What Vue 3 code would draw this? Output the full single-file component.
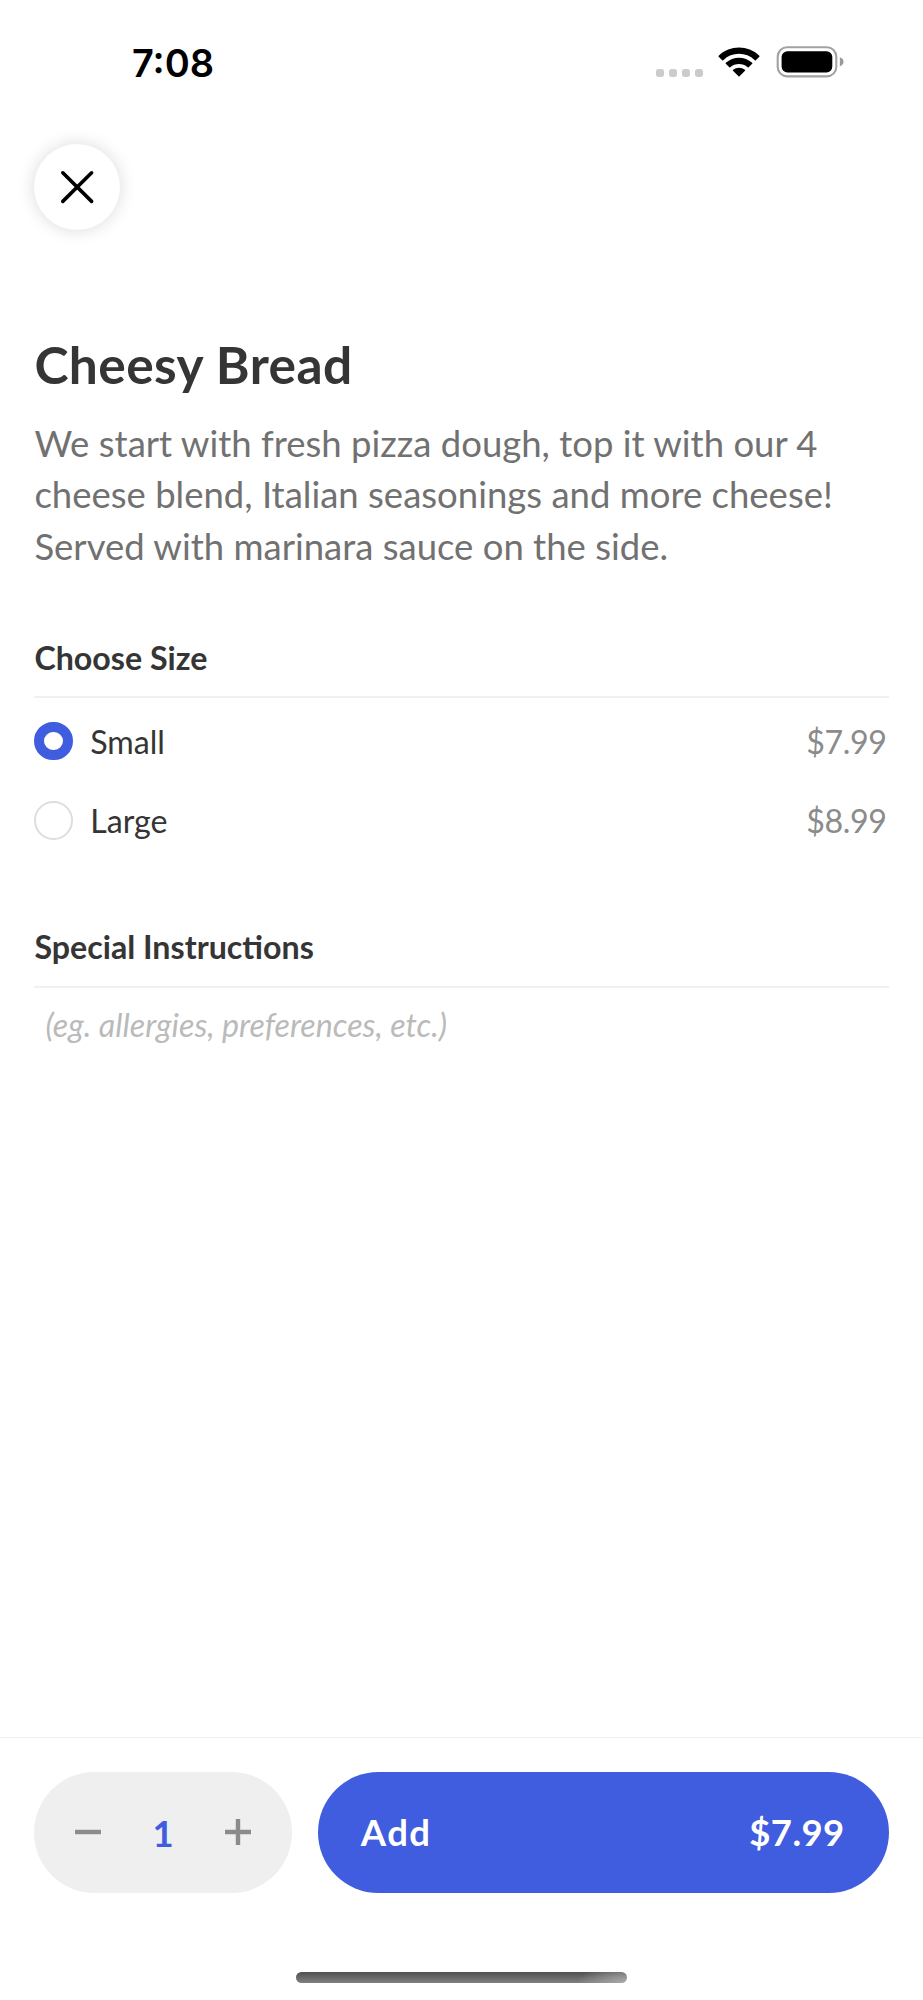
<script setup>
import { ref, computed } from 'vue'

const sizes = [
  { name: 'Small', price: 7.99 },
  { name: 'Large', price: 8.99 }
]
const selected = ref(0)
const quantity = ref(1)
const notes = ref('')
const money = (value) => '$' + value.toFixed(2)
const total = computed(() => money(sizes[selected.value].price * quantity.value))
</script>

<template>
  <div class="screen">
    <header class="status">
      <span class="time">7:08</span>
      <div class="indicators">
        <div class="signal"><i v-for="n in 4" :key="n"></i></div>
        <svg class="wifi" width="42" height="31" viewBox="0 0 42 31">
          <path d="M0.7 9.7Q0.2 9.2 0.7 8.7C12-2.2 30-2.2 41.3 8.7Q41.8 9.2 41.3 9.7L37.8 13.2Q37.3 13.6 36.8 13.2C28 4.7 14 4.7 5.2 13.2Q4.7 13.6 4.2 13.2Z" />
          <path d="M7.8 16.8Q7.3 16.3 7.8 15.8C15.2 8.9 26.8 8.9 34.2 15.8Q34.7 16.3 34.2 16.8L30.7 20.2Q30.2 20.7 29.7 20.2C24.8 15.9 17.2 15.9 12.3 20.2Q11.8 20.7 11.3 20.2Z" />
          <path d="M15 23.8Q14.5 23.3 15.1 22.8C18.5 20 23.5 20 26.9 22.8Q27.5 23.3 27 23.8L21.5 29.3Q21 29.8 20.5 29.3Z" />
        </svg>
        <svg class="battery" width="68" height="32" viewBox="0 0 68 32">
          <rect x="1.7" y="1.2" width="58.6" height="29.2" rx="9.5" fill="none" stroke="#a2a2a2" stroke-width="2.1" />
          <rect x="5.6" y="5.2" width="50.7" height="21.2" rx="5.8" />
          <path d="M63.8 11.3C66.2 12.2 67.5 13.8 67.5 15.8S66.2 19.5 63.8 20.4Z" fill="#999" />
        </svg>
      </div>
    </header>

    <button class="close" aria-label="Close">
      <svg width="36" height="36" viewBox="0 0 36 36">
        <path d="M3.8 3.8L32.6 32.4M32.6 3.8L3.8 32.4" stroke="#000" stroke-width="3.6" stroke-linecap="round" />
      </svg>
    </button>

    <main>
      <h1>Cheesy Bread</h1>
      <p class="description">We start with fresh pizza dough, top it with our 4 cheese blend, Italian seasonings and more cheese! Served with marinara sauce on the side.</p>

      <section class="sizes">
        <h2>Choose Size</h2>
        <div class="options">
          <div v-for="(size, index) in sizes" :key="size.name" class="option" @click="selected = index">
            <span class="radio" :class="{ checked: index === selected }"></span>
            <span class="name">{{ size.name }}</span>
            <span class="price">{{ money(size.price) }}</span>
          </div>
        </div>
      </section>

      <section class="instructions">
        <h2>Special Instructions</h2>
        <input v-model="notes" placeholder="(eg. allergies, preferences, etc.)" />
      </section>
    </main>

    <footer>
      <div class="actions">
        <div class="stepper">
          <button aria-label="Decrease" @click="quantity = Math.max(1, quantity - 1)">
            <svg width="26" height="26" viewBox="0 0 26 26"><path d="M0 13H26" /></svg>
          </button>
          <span>{{ quantity }}</span>
          <button aria-label="Increase" @click="quantity++">
            <svg width="26" height="26" viewBox="0 0 26 26"><path d="M0 13H26M13 0V26" /></svg>
          </button>
        </div>
        <button class="add"><span>Add</span><span class="total">{{ total }}</span></button>
      </div>
      <div class="home"></div>
    </footer>
  </div>
</template>

<style>
body { margin: 0; background: #fff; }
</style>

<style scoped>
* { box-sizing: border-box; }
.screen { width: 923px; height: 2000px; display: flex; flex-direction: column; background: #fff; color: #353535; font-family: Lato, sans-serif; overflow: hidden; }
button { border: 0; padding: 0; font: inherit; color: inherit; background: none; }
.status { height: 143.5px; flex: none; padding: 39px 79.5px 0 132px; display: flex; justify-content: space-between; }
.time { height: 48px; font: 600 38px/48px Inter, sans-serif; color: #000; }
.indicators { display: flex; align-items: flex-start; }
.signal { display: flex; gap: 5px; margin: 30px 15px 0 0; }
.signal i { width: 8px; height: 8px; border-radius: 2.7px; background: #cbcbcb; }
.wifi { margin: 7.5px 16px 0 0; }
.battery { margin-top: 7px; }
.close { width: 86px; height: 86px; flex: none; margin-left: 34.4px; border-radius: 50%; background: #fff; box-shadow: 0 0 17px rgba(0, 0, 0, .15); display: flex; align-items: center; justify-content: center; }
main { flex: 1; padding: 104.5px 34.4px 0; }
h1 { margin: 0; font-size: 51.5px; line-height: 60px; font-weight: 700; letter-spacing: .4px; }
.description { margin: 23.5px 0 0; width: 830px; font-size: 36.5px; line-height: 51.5px; color: #717171; }
h2 { margin: 0; height: 60px; font-size: 32.2px; line-height: 40px; font-weight: 700; border-bottom: 2px solid #f0f0f0; }
.sizes { margin-top: 66.2px; }
.options { padding-top: 3.2px; }
.option { height: 79.4px; display: flex; align-items: center; font-size: 32.2px; line-height: 40px; }
.radio { width: 38.6px; height: 38.6px; margin-right: 17.2px; border: 2px solid #dedede; border-radius: 50%; }
.radio.checked { border: 10.7px solid #405cdf; }
.name, .price { padding-top: 1.5px; }
.price { margin-left: auto; padding-right: 2px; color: #8b8b8b; letter-spacing: -.4px; }
.instructions { margin-top: 66.5px; }
.instructions h2 { height: 61px; }
input { display: block; width: 100%; height: 40px; margin-top: 17px; padding: 0 11px; border: 0; outline: 0; background: none; font: italic 32.2px/40px Lato, sans-serif; color: #353535; }
input::placeholder { color: #bababa; opacity: 1; }
footer { height: 263px; flex: none; border-top: 1px solid #f2f2f2; padding: 34px 34.4px 0; }
.actions { display: flex; gap: 25.7px; height: 120.6px; }
.stepper { width: 257.6px; border-radius: 61px; background: #efefef; display: flex; align-items: center; justify-content: space-between; padding: 0 40.5px; font-size: 36.5px; font-weight: 700; color: #405cdf; }
.stepper span { position: relative; top: 1px; }
.stepper svg { display: block; stroke: #8b8b8b; stroke-width: 4.4; }
.add { flex: 1; border-radius: 61px; background: #405cdf; color: #fff; display: flex; align-items: center; justify-content: space-between; padding: 0 44px 0 43px; font-size: 36.5px; font-weight: 700; letter-spacing: 1.5px; }
.total { letter-spacing: .4px; }
.home { width: 331px; height: 11px; margin: 79.4px auto 0; border-radius: 6px; background: radial-gradient(ellipse 50px 20px at 100% 100%, rgba(175, 175, 175, .9), transparent), linear-gradient(#505050, #808080); }
</style>
